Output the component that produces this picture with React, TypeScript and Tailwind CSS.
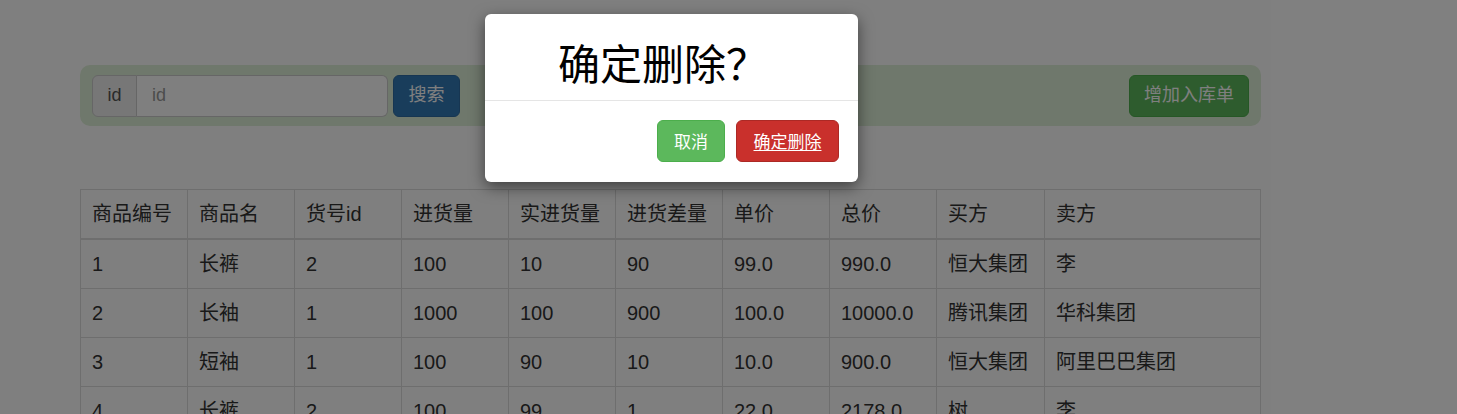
import React from "react";

const rows = [
  ["1", "长裤", "2", "100", "10", "90", "99.0", "990.0", "恒大集团", "李"],
  ["2", "长袖", "1", "1000", "100", "900", "100.0", "10000.0", "腾讯集团", "华科集团"],
  ["3", "短袖", "1", "100", "90", "10", "10.0", "900.0", "恒大集团", "阿里巴巴集团"],
  ["4", "长裤", "2", "100", "99", "1", "22.0", "2178.0", "树", "李"],
];

const heads = ["商品编号", "商品名", "货号id", "进货量", "实进货量", "进货差量", "单价", "总价", "买方", "卖方"];

export default function App() {
  const font = { fontFamily: '"Liberation Sans", "Noto Sans CJK SC", sans-serif' };
  return (
    <div className="relative w-[1457px] h-[414px] overflow-hidden bg-white text-[#333]" style={font}>
      <div className="pt-[65px] pl-[80px]">
        <div className="w-[1181px] h-[61px] rounded-[10px] bg-[#dff0d8] flex items-center px-[12px]">
          <div className="flex h-[42px]">
            <div className="w-[45px] h-[42px] flex items-center justify-center bg-[#eee] border border-[#ccc] rounded-l-[6px] text-[18px] text-[#555]">id</div>
            <div className="w-[251px] h-[42px] flex items-center bg-white border border-l-0 border-[#ccc] rounded-r-[6px] pl-[15px] text-[18px] text-[#999]">id</div>
          </div>
          <div className="ml-[5px] h-[42px] w-[67px] flex items-center justify-center bg-[#337ab7] border border-[#2e6da4] rounded-[6px] text-white text-[18px]">搜索</div>
          <div className="ml-auto h-[42px] w-[120px] flex items-center justify-center bg-[#5cb85c] border border-[#4cae4c] rounded-[6px] text-white text-[18px]">增加入库单</div>
        </div>
        <table className="mt-[63px] w-[1180px] table-fixed border-collapse text-[20px] leading-[24px]">
          <colgroup>
            {heads.map((_, i) => (
              <col key={i} className={i === 9 ? "w-[216px]" : i === 8 ? "w-[108px]" : "w-[107px]"} />
            ))}
          </colgroup>
          <thead>
            <tr>
              {heads.map((h) => (
                <th key={h} className="border border-[#ddd] border-b-2 px-[11px] py-[12px] text-left font-normal whitespace-nowrap">{h}</th>
              ))}
            </tr>
          </thead>
          <tbody>
            {rows.map((r, ri) => (
              <tr key={ri}>
                {r.map((c, ci) => (
                  <td key={ci} className="border border-[#ddd] px-[11px] py-[12px] whitespace-nowrap">{c}</td>
                ))}
              </tr>
            ))}
          </tbody>
        </table>
      </div>

      <div className="absolute inset-0 bg-black/50" />

      <div className="absolute left-[485px] top-[14px] w-[373px] bg-white rounded-[6px] shadow-[0_5px_15px_rgba(0,0,0,0.5)]" style={{ fontFamily: '"Noto Sans CJK SC", "Liberation Sans", sans-serif' }}>
        <div className="h-[87px] border-b border-[#e5e5e5] pl-[73px] pt-[25px] text-[42px] leading-[46px] text-black whitespace-nowrap">确定删除？</div>
        <div className="flex justify-end gap-[11px] pt-[19px] pb-[20px] pr-[19px]">
          <div className="h-[42px] w-[68px] flex items-center justify-center bg-[#5cb85c] border border-[#4cae4c] rounded-[6px] text-white text-[17px]">取消</div>
          <div className="h-[42px] w-[103px] flex items-center justify-center bg-[#c9302c] border border-[#ac2925] rounded-[6px] text-white text-[17px] underline underline-offset-2">确定删除</div>
        </div>
      </div>
    </div>
  );
}
